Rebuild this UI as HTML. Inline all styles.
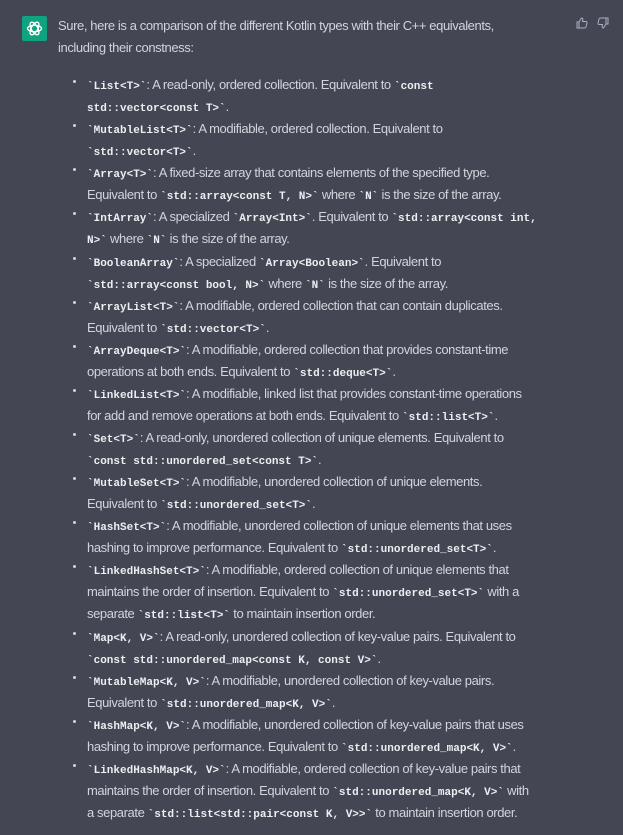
<!DOCTYPE html>
<html><head><meta charset="utf-8"><style>
html,body{margin:0;padding:0}
body{width:623px;height:835px;background:#444654;position:relative;overflow:hidden;font-family:"Liberation Sans",sans-serif;font-size:13px;color:#d1d5db;letter-spacing:-0.4px}
.l{position:absolute;white-space:nowrap;height:22px;line-height:22px}
code{font-family:"Liberation Mono",monospace;font-size:11px;font-weight:bold;color:#eceef1;letter-spacing:0;line-height:0;vertical-align:baseline}
.b{position:absolute;left:73px;width:3px;height:3px;background:#d1d5db;border-radius:50%}
</style></head><body>
<div style="position:absolute;left:22px;top:16px;width:25px;height:25px;background:#10a37f;border-radius:2px">
<svg width="25" height="25" viewBox="0 0 25 25"><g fill="none" stroke="#fff" stroke-width="1.3"><ellipse cx="12.5" cy="12.5" rx="7" ry="3.2"/><ellipse cx="12.5" cy="12.5" rx="7" ry="3.2" transform="rotate(60 12.5 12.5)"/><ellipse cx="12.5" cy="12.5" rx="7" ry="3.2" transform="rotate(120 12.5 12.5)"/></g></svg></div>
<svg style="position:absolute;left:576px;top:17px" width="12" height="12" viewBox="0 0 12 12" fill="none" stroke="#acacbe" stroke-width="1"><path d="M1 5h2v6H1zM3 5l2.5-4c1 0 1.5.7 1.3 1.7L6.5 4.5H10c.7 0 1.2.6 1 1.3l-1 4.2c-.2.6-.6 1-1.2 1H3"/></svg>
<svg style="position:absolute;left:597px;top:17px" width="12" height="12" viewBox="0 0 12 12" fill="none" stroke="#acacbe" stroke-width="1"><path d="M11 7H9V1h2zM9 7l-2.5 4c-1 0-1.5-.7-1.3-1.7l.3-1.8H2c-.7 0-1.2-.6-1-1.3l1-4.2C2.2 1.4 2.6 1 3.2 1H9"/></svg>
<div class="l" style="left:58px;top:15px">Sure, here is a comparison of the different Kotlin types with their C++ equivalents,</div>
<div class="l" style="left:58px;top:37px">including their constness:</div>

<div id="c"></div>
<script>
const L=[
[1,"<code>`List&lt;T&gt;`</code>: A read-only, ordered collection. Equivalent to <code>`const</code>"],
[0,"<code>std::vector&lt;const T&gt;`</code>."],
[1,"<code>`MutableList&lt;T&gt;`</code>: A modifiable, ordered collection. Equivalent to"],
[0,"<code>`std::vector&lt;T&gt;`</code>."],
[1,"<code>`Array&lt;T&gt;`</code>: A fixed-size array that contains elements of the specified type."],
[0,"Equivalent to <code>`std::array&lt;const T, N&gt;`</code> where <code>`N`</code> is the size of the array."],
[1,"<code>`IntArray`</code>: A specialized <code>`Array&lt;Int&gt;`</code>. Equivalent to <code>`std::array&lt;const int,</code>"],
[0,"<code>N&gt;`</code> where <code>`N`</code> is the size of the array."],
[1,"<code>`BooleanArray`</code>: A specialized <code>`Array&lt;Boolean&gt;`</code>. Equivalent to"],
[0,"<code>`std::array&lt;const bool, N&gt;`</code> where <code>`N`</code> is the size of the array."],
[1,"<code>`ArrayList&lt;T&gt;`</code>: A modifiable, ordered collection that can contain duplicates."],
[0,"Equivalent to <code>`std::vector&lt;T&gt;`</code>."],
[1,"<code>`ArrayDeque&lt;T&gt;`</code>: A modifiable, ordered collection that provides constant-time"],
[0,"operations at both ends. Equivalent to <code>`std::deque&lt;T&gt;`</code>."],
[1,"<code>`LinkedList&lt;T&gt;`</code>: A modifiable, linked list that provides constant-time operations"],
[0,"for add and remove operations at both ends. Equivalent to <code>`std::list&lt;T&gt;`</code>."],
[1,"<code>`Set&lt;T&gt;`</code>: A read-only, unordered collection of unique elements. Equivalent to"],
[0,"<code>`const std::unordered_set&lt;const T&gt;`</code>."],
[1,"<code>`MutableSet&lt;T&gt;`</code>: A modifiable, unordered collection of unique elements."],
[0,"Equivalent to <code>`std::unordered_set&lt;T&gt;`</code>."],
[1,"<code>`HashSet&lt;T&gt;`</code>: A modifiable, unordered collection of unique elements that uses"],
[0,"hashing to improve performance. Equivalent to <code>`std::unordered_set&lt;T&gt;`</code>."],
[1,"<code>`LinkedHashSet&lt;T&gt;`</code>: A modifiable, ordered collection of unique elements that"],
[0,"maintains the order of insertion. Equivalent to <code>`std::unordered_set&lt;T&gt;`</code> with a"],
[0,"separate <code>`std::list&lt;T&gt;`</code> to maintain insertion order."],
[1,"<code>`Map&lt;K, V&gt;`</code>: A read-only, unordered collection of key-value pairs. Equivalent to"],
[0,"<code>`const std::unordered_map&lt;const K, const V&gt;`</code>."],
[1,"<code>`MutableMap&lt;K, V&gt;`</code>: A modifiable, unordered collection of key-value pairs."],
[0,"Equivalent to <code>`std::unordered_map&lt;K, V&gt;`</code>."],
[1,"<code>`HashMap&lt;K, V&gt;`</code>: A modifiable, unordered collection of key-value pairs that uses"],
[0,"hashing to improve performance. Equivalent to <code>`std::unordered_map&lt;K, V&gt;`</code>."],
[1,"<code>`LinkedHashMap&lt;K, V&gt;`</code>: A modifiable, ordered collection of key-value pairs that"],
[0,"maintains the order of insertion. Equivalent to <code>`std::unordered_map&lt;K, V&gt;`</code> with"],
[0,"a separate <code>`std::list&lt;std::pair&lt;const K, V&gt;&gt;`</code> to maintain insertion order."]];
let h="";L.forEach((x,i)=>{const c=85+i*22.06;h+=`<div class="l" style="left:87px;top:${(c-11).toFixed(1)}px">${x[1]}</div>`;if(x[0])h+=`<div class="b" style="top:${(c-5).toFixed(1)}px"></div>`;});
document.getElementById("c").innerHTML=h;
</script>
</body></html>
